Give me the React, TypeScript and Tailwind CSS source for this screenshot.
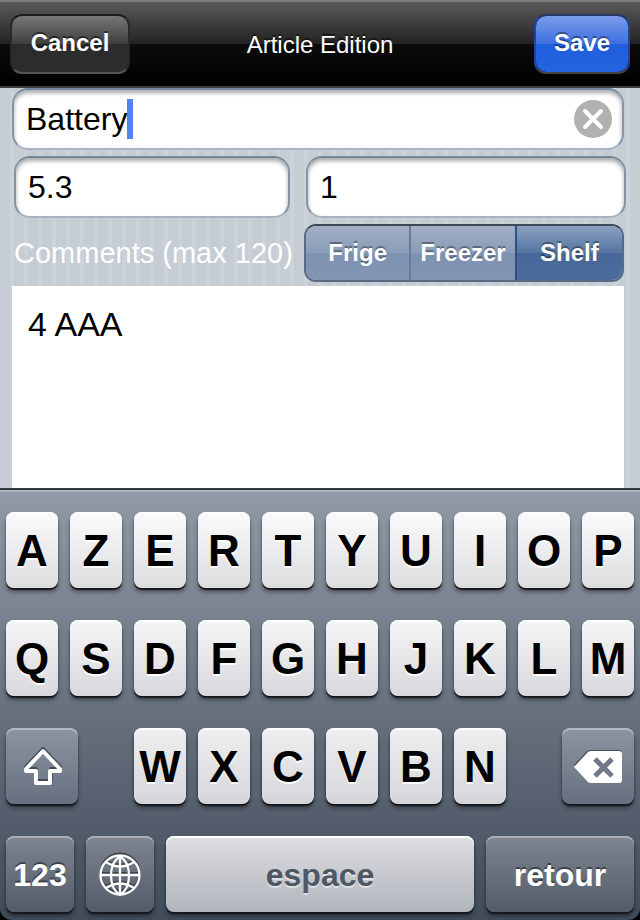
import React, { useState } from 'react';

type KeyProps = {
  label: string;
  children: React.ReactNode;
  className?: string;
};

const fieldClass =
  'h-[62px] w-full min-w-0 rounded-[16px] border-2 border-t-[#72869c] border-x-[#8495aa] border-b-[#a9b4c3] bg-white px-3 text-[32px] text-black shadow-[inset_0_3px_4px_rgba(0,0,0,0.35)] outline-none';

const LetterKey: React.FC<{ letter: string; tone: string }> = ({ letter, tone }) => (
  <button
    type="button"
    className={`h-[76px] min-w-0 rounded-lg bg-linear-to-b pt-0.5 text-[44px] leading-none font-bold text-black shadow-[0_2px_1px_#15181c,0_4px_4px_rgba(0,0,0,0.4),inset_0_2px_0_rgba(255,255,255,0.8)] [text-shadow:0_2px_0_#fff] ${tone}`}
  >
    {letter}
  </button>
);

const DarkKey: React.FC<KeyProps> = ({ label, children, className = '' }) => (
  <button
    type="button"
    aria-label={label}
    className={`flex h-[76px] min-w-0 items-center justify-center rounded-lg bg-linear-to-b pt-0.5 text-[32px] leading-none font-bold text-white shadow-[0_2px_1px_#15181c,0_4px_4px_rgba(0,0,0,0.4),inset_0_2px_0_rgba(255,255,255,0.35)] [text-shadow:0_-2px_0_#3c424b] ${className}`}
  >
    {children}
  </button>
);

const ShiftIcon = () => (
  <svg width="44" height="44" viewBox="0 0 44 44" fill="none" strokeLinejoin="round" aria-hidden="true">
    <path d="M23 4 L40 22 V24 H31 V36 H16 V24 H6 V22 Z" stroke="#454c58" strokeWidth="4" />
    <path d="M23 6 L40 24 V26 H30 V38 H16 V26 H6 V24 Z" stroke="#fff" strokeWidth="4" />
  </svg>
);

const DeleteIcon = () => (
  <svg width="48" height="34" viewBox="0 0 48 34" aria-hidden="true">
    <path d="M0 15 L13 1 Q14 0 17 0 H45 Q48 0 48 3 V28 Q48 31 45 31 H17 Q14 31 13 30 Z" fill="#4a515d" />
    <path d="M0 17 L13 3 Q14 1 17 1 H45 Q48 1 48 4 V30 Q48 33 45 33 H17 Q14 33 13 31 Z" fill="#fff" />
    <path d="M21 9 L38 26 M38 9 L21 26" stroke="#707989" strokeWidth="5" />
  </svg>
);

const globeLines =
  'M22 2 V41 M2 21 H42 M22 2 C10 10 10 33 22 41 M22 2 C34 10 34 33 22 41 M8 8 Q22 17 36 8 M8 34 Q22 25 36 34';

const GlobeIcon = () => (
  <svg width="44" height="46" viewBox="0 0 44 46" fill="none" aria-hidden="true">
    <g stroke="#3e444e" strokeWidth="2">
      <circle cx="22" cy="21" r="19.500" />
      <path d={globeLines} />
    </g>
    <g stroke="#fff" strokeWidth="2.300" transform="translate(0 2)">
      <circle cx="22" cy="21" r="19.500" />
      <path d={globeLines} />
    </g>
  </svg>
);

const places = ['Frige', 'Freezer', 'Shelf'];

const App = () => {
  const [name, setName] = useState('Battery');
  const [place, setPlace] = useState('Shelf');

  return (
    <div className="flex min-h-screen flex-col bg-black font-['Liberation_Sans',Arial,sans-serif]">
      <header className="grid h-[88px] grid-cols-[1fr_auto_1fr] items-center border-t-2 border-b-2 border-t-[#7d7d7d] border-b-[#3c3c3c] bg-[linear-gradient(#5a5a5a,#222_50%,#0c0c0c_50%,#000)] px-2.5 text-2xl text-white">
        <button
          type="button"
          className="h-[60px] w-[120px] justify-self-start rounded-xl border-2 border-t-[#1c1c1c] border-x-[#292929] border-b-[#555] bg-[linear-gradient(#777,#3e3e3e_50%,#2b2b2b_50%,#2e2e2e)] pb-0.5 font-bold [text-shadow:0_-2px_0_rgba(0,0,0,0.5)]"
        >
          Cancel
        </button>
        <h1 className="pt-0.5 [text-shadow:0_-2px_0_rgba(0,0,0,0.5)]">Article Edition</h1>
        <button
          type="button"
          className="h-[60px] w-24 justify-self-end rounded-xl border-2 border-t-[#26376a] border-x-[#1e449e] border-b-[#444] bg-[linear-gradient(#7b9bea,#3c70e0_50%,#205fdd_50%,#2464de)] bg-clip-padding pb-0.5 font-bold [text-shadow:0_-2px_0_rgba(0,0,0,0.4)]"
        >
          Save
        </button>
      </header>

      <main className="flex flex-1 flex-col bg-[#c5ccd4] bg-[linear-gradient(90deg,#cbd2d8_0_4px,#c5ccd4_4px)] bg-size-[14px_14px] bg-position-[10px_0] px-3 pr-4">
        <div className="relative">
          <input aria-label="Name" value={name} onChange={(e) => setName(e.target.value)} className={fieldClass} />
          <span className="pointer-events-none absolute inset-y-0 left-0 flex items-center pl-3.5 text-[32px]">
            <span className="invisible">{name}</span>
            <span className="h-10 w-1.5 bg-[#587ff5]" />
          </span>
          <button
            type="button"
            aria-label="Clear name"
            onClick={() => setName('')}
            className="absolute inset-y-0 right-3 my-auto h-[38px] w-[38px] rounded-full bg-[#b1b1b1]"
          >
            <svg viewBox="0 0 38 38" fill="none" stroke="#fff" strokeWidth="4" strokeLinecap="round" aria-hidden="true">
              <path d="M11 11 L27 27 M27 11 L11 27" />
            </svg>
          </button>
        </div>

        <div className="mt-1.5 -mr-0.5 ml-0.5 grid grid-cols-[276fr_320fr] gap-4">
          <input aria-label="Price" defaultValue="5.3" className={fieldClass} />
          <input aria-label="Quantity" defaultValue="1" className={fieldClass} />
        </div>

        <div className="mt-1.5 flex items-center justify-between pl-0.5">
          <label htmlFor="comments" className="pt-0.5 text-[29px] whitespace-nowrap text-white">
            Comments (max 120)
          </label>
          <div className="grid h-[58px] w-80 grid-cols-3 overflow-hidden rounded-xl border-2 border-t-[#3e4856] border-x-[#596a84] border-b-[#596a84] text-2xl font-bold text-white">
            {places.map((item, index) => (
              <button
                key={item}
                type="button"
                aria-pressed={place === item}
                onClick={() => setPlace(item)}
                className={`border-r-2 last:border-r-0 [text-shadow:0_-2px_0_rgba(0,0,0,0.35)] ${
                  places[index + 1] === place ? 'border-[#2f5085]' : 'border-[#697c98]'
                } ${
                  place === item
                    ? 'bg-[linear-gradient(#8aa0c0,#54759f_50%,#466798_50%,#4b6c9b)]'
                    : 'bg-[linear-gradient(#a2afc4,#8a9cb7_50%,#7d92b1_50%,#8296b3)]'
                }`}
              >
                {item}
              </button>
            ))}
          </div>
        </div>

        <textarea
          id="comments"
          maxLength={120}
          defaultValue="4 AAA"
          className="mt-1 min-h-[202px] w-full flex-1 resize-none bg-white px-4 py-[18px] text-[34px] leading-10 text-black outline-none"
        />
      </main>

      <section
        aria-label="Keyboard"
        className="flex flex-col gap-8 rounded-b-xl border-t-2 border-[#33373f] bg-linear-to-b from-[#929aa7] via-[#69727f] to-[#414c5b] px-1.5 pt-[22px] pb-2 shadow-[inset_0_2px_0_#adb3bd]"
      >
        <div className="grid grid-cols-10 gap-3">
          {[...'AZERTYUIOP'].map((k) => (
            <LetterKey key={k} letter={k} tone="from-[#fbfbfc] to-[#dcdddf]" />
          ))}
        </div>
        <div className="grid grid-cols-10 gap-3">
          {[...'QSDFGHJKLM'].map((k) => (
            <LetterKey key={k} letter={k} tone="from-[#f5f5f7] to-[#d8d9dc]" />
          ))}
        </div>
        <div className="grid grid-cols-[72fr_32fr_52fr_52fr_52fr_52fr_52fr_52fr_32fr_72fr] gap-x-3">
          <DarkKey label="Shift" className="from-[#8d94a1] to-[#667080]">
            <ShiftIcon />
          </DarkKey>
          <span />
          {[...'WXCVBN'].map((k) => (
            <LetterKey key={k} letter={k} tone="from-[#efeff1] to-[#d5d6da]" />
          ))}
          <span />
          <DarkKey label="Delete" className="from-[#8d94a1] to-[#667080]">
            <DeleteIcon />
          </DarkKey>
        </div>
        <div className="grid grid-cols-[68fr_68fr_308fr_148fr] gap-3">
          <DarkKey label="123" className="from-[#7f8591] to-[#525c69]">
            123
          </DarkKey>
          <DarkKey label="Next keyboard" className="from-[#7f8591] to-[#525c69]">
            <GlobeIcon />
          </DarkKey>
          <button
            type="button"
            className="h-[76px] rounded-lg bg-linear-to-b from-[#dedfe2] to-[#b0b4bc] pt-0.5 text-[32px] leading-none font-bold text-[#4e5764] shadow-[0_2px_1px_#15181c,0_4px_4px_rgba(0,0,0,0.4),inset_0_2px_0_#fff] [text-shadow:0_2px_0_rgba(255,255,255,0.5)]"
          >
            espace
          </button>
          <DarkKey label="retour" className="from-[#7f8591] to-[#525c69]">
            retour
          </DarkKey>
        </div>
      </section>
    </div>
  );
};

export default App;
